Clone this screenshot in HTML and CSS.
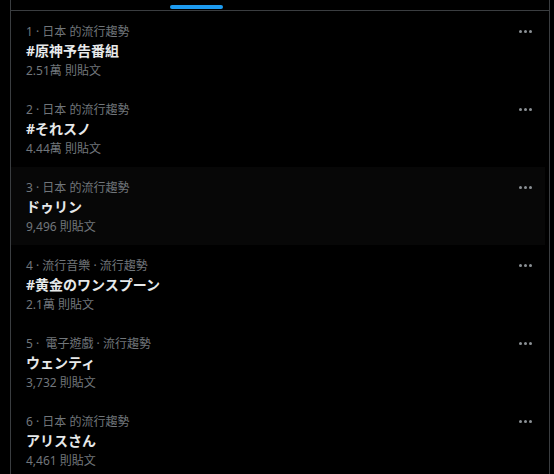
FILE: index.html
```html
<!DOCTYPE html>
<html lang="zh-Hant">
<head>
<meta charset="utf-8">
<link rel="stylesheet" href="styles.css">
</head>
<body>
<div class="panel">
  <div class="tabs"><div class="indicator"></div></div>
  <div class="list">
    <div class="row">
      <div class="info">
        <div class="meta">1 · 日本 的流行趨勢</div>
        <div class="title">#原神予告番組</div>
        <div class="count">2.51萬 則貼文</div>
      </div>
      <div class="more"><span></span><span></span><span></span></div>
    </div>
    <div class="row">
      <div class="info">
        <div class="meta">2 · 日本 的流行趨勢</div>
        <div class="title">#それスノ</div>
        <div class="count">4.44萬 則貼文</div>
      </div>
      <div class="more"><span></span><span></span><span></span></div>
    </div>
    <div class="row hover">
      <div class="info">
        <div class="meta">3 · 日本 的流行趨勢</div>
        <div class="title">ドゥリン</div>
        <div class="count">9,496 則貼文</div>
      </div>
      <div class="more"><span></span><span></span><span></span></div>
    </div>
    <div class="row">
      <div class="info">
        <div class="meta">4 · 流行音樂 · 流行趨勢</div>
        <div class="title">#黄金のワンスプーン</div>
        <div class="count">2.1萬 則貼文</div>
      </div>
      <div class="more"><span></span><span></span><span></span></div>
    </div>
    <div class="row">
      <div class="info">
        <div class="meta">5 ·  電子遊戲 · 流行趨勢</div>
        <div class="title">ウェンティ</div>
        <div class="count">3,732 則貼文</div>
      </div>
      <div class="more"><span></span><span></span><span></span></div>
    </div>
    <div class="row">
      <div class="info">
        <div class="meta">6 · 日本 的流行趨勢</div>
        <div class="title">アリスさん</div>
        <div class="count">4,461 則貼文</div>
      </div>
      <div class="more"><span></span><span></span><span></span></div>
    </div>
  </div>
</div>
</body>
</html>
```
FILE: styles.css
```css
html, body {
  margin: 0;
  padding: 0;
  background: #000;
  height: 100%;
  overflow: hidden;
}
body {
  font-family: "Noto Sans", "Noto Sans CJK TC", "Noto Sans CJK JP", sans-serif;
  color: #e7e9ea;
}
.panel {
  margin-left: 10px;
  width: 538px;
  min-height: 100%;
  border-left: 1px solid #3a3d40;
  border-right: 1px solid #3a3d40;
}
.tabs {
  box-sizing: border-box;
  height: 11px;
  padding-top: 5px;
  border-bottom: 1px solid #3a3d40;
}
.indicator {
  margin-left: 159px;
  width: 53px;
  height: 4px;
  border-radius: 2px;
  background: #1d9bf0;
}
.list {
  margin-right: 4px;
}
.row {
  display: flex;
  justify-content: space-between;
  align-items: flex-start;
  padding: 13px 13px 10px 15px;
  height: 55px;
}
.row.hover {
  background: #070707;
}
.meta, .count {
  font-size: 12px;
  line-height: 16px;
  color: #71767b;
  white-space: pre;
}
.title {
  margin-top: 1px;
  font-size: 14px;
  line-height: 20px;
  font-weight: 700;
  color: #e7e9ea;
}
.count {
  margin-top: 2px;
}
.more {
  display: flex;
  gap: 2px;
  padding-top: 6px;
}
.more span {
  width: 3px;
  height: 3px;
  border-radius: 50%;
  background: #8b9095;
}
```
